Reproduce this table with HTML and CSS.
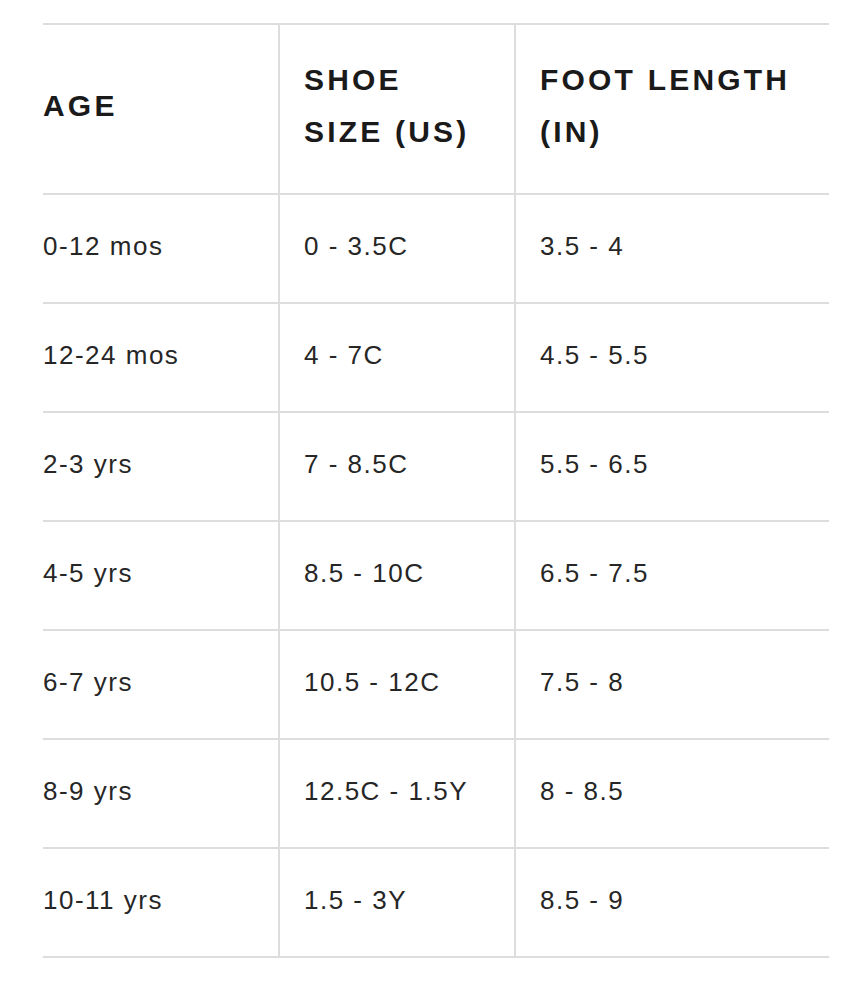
FILE: index.html
```html
<!DOCTYPE html>
<html lang="en">
<head>
<meta charset="utf-8">
<title>Size chart</title>
<link rel="stylesheet" href="styles.css">
</head>
<body>
<div class="wrap">
  <table class="size-table">
    <colgroup>
      <col class="c1">
      <col class="c2">
      <col class="c3">
    </colgroup>
    <thead>
      <tr>
        <th>AGE</th>
        <th>SHOE<br>SIZE (US)</th>
        <th>FOOT LENGTH<br>(IN)</th>
      </tr>
    </thead>
    <tbody>
      <tr><td>0-12 mos</td><td>0 - 3.5C</td><td>3.5 - 4</td></tr>
      <tr><td>12-24 mos</td><td>4 - 7C</td><td>4.5 - 5.5</td></tr>
      <tr><td>2-3 yrs</td><td>7 - 8.5C</td><td>5.5 - 6.5</td></tr>
      <tr><td>4-5 yrs</td><td>8.5 - 10C</td><td>6.5 - 7.5</td></tr>
      <tr><td>6-7 yrs</td><td>10.5 - 12C</td><td>7.5 - 8</td></tr>
      <tr><td>8-9 yrs</td><td>12.5C - 1.5Y</td><td>8 - 8.5</td></tr>
      <tr><td>10-11 yrs</td><td>1.5 - 3Y</td><td>8.5 - 9</td></tr>
    </tbody>
  </table>
</div>
</body>
</html>
```

FILE: styles.css
```css
html, body {
  margin: 0;
  padding: 0;
  background: #ffffff;
}

.wrap {
  padding: 23px 31px 0 43px;
}

.size-table {
  width: 786px;
  table-layout: fixed;
  border-collapse: separate;
  border-spacing: 0;
  font-family: "Liberation Sans", Arial, sans-serif;
}

.c1 { width: 235px; }
.c2 { width: 236px; }
.c3 { width: 315px; }

.size-table th,
.size-table td {
  box-sizing: border-box;
  text-align: left;
  vertical-align: middle;
  padding-left: 24px;
  padding-right: 8px;
  border-bottom: 2px solid #dddddd;
}

.size-table th + th,
.size-table td + td {
  border-left: 2px solid #dddddd;
}

.size-table th:first-child,
.size-table td:first-child {
  padding-left: 0;
}

.size-table th {
  border-top: 2px solid #dddddd;
  font-size: 30px;
  font-weight: bold;
  letter-spacing: 3.2px;
  line-height: 52px;
  color: #1a1a1a;
  padding-top: 29px;
  padding-bottom: 35px;
}

.size-table td {
  font-size: 26px;
  font-weight: normal;
  letter-spacing: 1.5px;
  line-height: 33px;
  color: #262626;
  padding-top: 35px;
  padding-bottom: 39px;
}
```
